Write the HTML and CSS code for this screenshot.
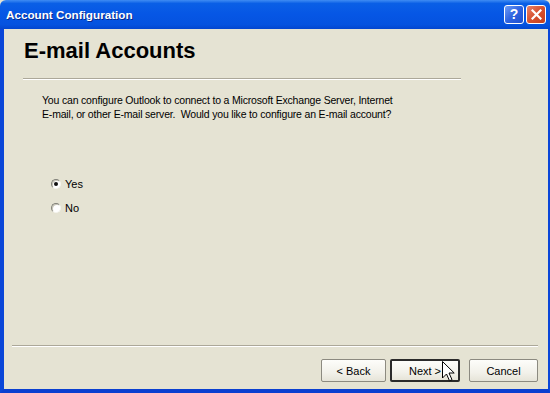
FILE: index.html
```html
<!DOCTYPE html>
<html>
<head>
<meta charset="utf-8">
<link rel="stylesheet" href="styles.css">
</head>
<body>
<div class="window">
  <div class="titlebar">
    <span class="title">Account Configuration</span>
    <div class="tb-buttons">
      <div class="tb-btn help">?</div>
      <div class="tb-btn close">
        <svg width="11" height="11" viewBox="0 0 11 11"><path d="M1.5 1.5 L9.5 9.5 M9.5 1.5 L1.5 9.5" stroke="#fff" stroke-width="2.2" stroke-linecap="square"/></svg>
      </div>
    </div>
  </div>
  <div class="frame">
    <h1 class="heading">E-mail Accounts</h1>
    <div class="sep top-sep"></div>
    <p class="intro">You can configure Outlook to connect to a Microsoft Exchange Server, Internet<br>E-mail, or other E-mail server.&nbsp; Would you like to configure an E-mail account?</p>
    <div class="options">
      <label class="option"><span class="radio checked"></span><span>Yes</span></label>
      <label class="option"><span class="radio"></span><span>No</span></label>
    </div>
    <div class="spacer"></div>
    <div class="sep bottom-sep"></div>
    <div class="buttons">
      <div class="btn">&lt; Back</div>
      <div class="btn default">Next &gt;</div>
      <div class="btn cancel">Cancel</div>
    </div>
    <svg class="cursor" width="13" height="21" viewBox="0 0 13 21"><path d="M0.5 0.5 L0.5 17 L4.5 13 L7.5 19.8 L10 18.7 L7 12 L12.2 12 Z" fill="#fff" stroke="#000" stroke-width="1" stroke-linejoin="miter"/></svg>
  </div>
</div>
</body>
</html>
```

FILE: styles.css
```css
* { box-sizing: border-box; }
html, body { margin: 0; padding: 0; background: #E5E3D3; }
.window {
  width: 550px;
  height: 393px;
  display: flex;
  flex-direction: column;
  position: relative;
  overflow: hidden;
  font-family: "Liberation Sans", Arial, sans-serif;
}
.titlebar {
  height: 29px;
  flex: none;
  display: flex;
  align-items: center;
  justify-content: space-between;
  padding: 0 4px 1px 6px;
  background: linear-gradient(to bottom, #3F8CF3 0%, #0A5FE6 12%, #0656E5 50%, #0553DF 85%, #0346CF 100%);
  border-radius: 6px 6px 0 0;
}
.title {
  color: #fff;
  font-weight: bold;
  font-size: 11.7px;
  text-shadow: 1px 1px 0 #0A2A8A;
}
.tb-buttons { display: flex; gap: 2px; }
.tb-btn {
  width: 20px;
  height: 19px;
  border: 1px solid #fff;
  border-radius: 3px;
  display: flex;
  align-items: center;
  justify-content: center;
  color: #fff;
  font-weight: bold;
  font-size: 14px;
}
.help { background: linear-gradient(135deg, #6E9CF6 0%, #2F63E0 50%, #1E4FD0 100%); }
.close { background: linear-gradient(135deg, #E9826A 0%, #D6512E 50%, #C43F1E 100%); }
.frame {
  flex: 1;
  display: flex;
  flex-direction: column;
  background: #E5E3D3;
  border-left: 4px solid #0A46D8;
  border-right: 2px solid #0A46D8;
  border-bottom: 4px solid #0A3FD0;
  position: relative;
  font-size: 11px;
  color: #000;
}
.heading {
  margin: 10px 0 0 20px;
  font-size: 22px;
  line-height: 23px;
  font-weight: bold;
  color: #000;
}
.sep {
  height: 2px;
  border-top: 1px solid #ACA899;
  border-bottom: 1px solid #FFFFFF;
}
.top-sep { margin: 16px 0 0 19px; width: 438px; }
.intro {
  margin: 13px 0 0 38px;
  line-height: 14px;
  font-size: 10.5px;
  letter-spacing: -0.18px;
}
.options {
  margin: 56px 0 0 47px;
  display: flex;
  flex-direction: column;
  gap: 10px;
}
.option {
  display: flex;
  align-items: center;
  gap: 4px;
  height: 14px;
}
.radio {
  width: 10px;
  height: 10px;
  border-radius: 50%;
  background: #fff;
  border: 1px solid;
  border-color: #808078 #F4F4EE #F4F4EE #808078;
  box-shadow: inset 1px 1px 0 #C8C6B8;
  position: relative;
}
.radio.checked::after {
  content: "";
  position: absolute;
  left: 2px;
  top: 2px;
  width: 4px;
  height: 4px;
  border-radius: 50%;
  background: #111;
}
.spacer { flex: 1; }
.bottom-sep { margin: 0 10px 0 8px; }
.buttons {
  display: flex;
  justify-content: flex-end;
  margin: 12px 10px 7px 0;
  gap: 4px;
}
.btn {
  height: 23px;
  width: 65px;
  display: flex;
  align-items: center;
  justify-content: center;
  background: linear-gradient(to bottom, #FDFDFA 0%, #F2F1EA 60%, #E6E4D8 100%);
  border: 1px solid #8C8A80;
  border-radius: 2px;
  font-size: 11px;
}
.btn.default {
  width: 70px;
  border: 2px solid #2A2A2A;
}
.btn.cancel { width: 69px; margin-left: 5px; }
.cursor {
  position: absolute;
  left: 438px;
  top: 332px;
}
```
